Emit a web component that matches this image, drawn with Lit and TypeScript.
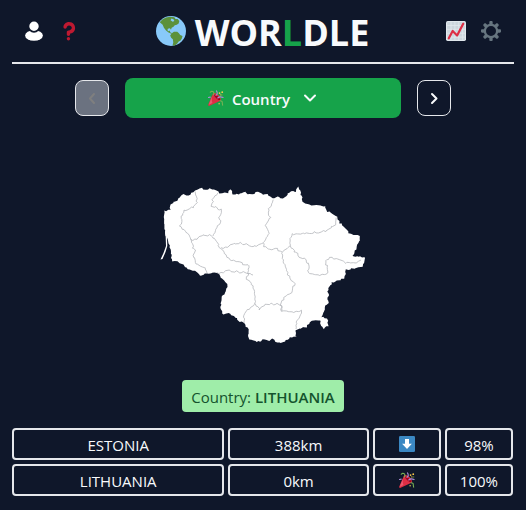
import { LitElement, html, css, svg } from "lit";
import { customElement, property, state } from "lit/decorators.js";

type Point = [number, number];

/* Country outline, clockwise from the north-west coast. */
const OUTLINE =
  "164,211 170,209 171,205 178,199 182,195 188,195 194,192 198,189 202,188 205,190 210,189 214,190 220,193 228,193 231,189 233,195 240,194 245,192 250,194 258,192 263,194 267,194 270,196 273,199 277,197 281,198 286,197 288,193 293,191 296,191 298,187 300,191 301,196 304,203 310,205 318,206 325,207 328,211 337,217 340,223 344,227 349,233 359,236 359,242 356,247 355,254 353,256 360,257 366,258 362,266 358,268 350,269 346,270 345,277 339,281 332,282 328,288 328,303 325,308 322,317 327,318 329,326 323,329 321,326 320,320 311,322 306,327 301,328 295,330 296,337 290,337 283,343 277,342 273,339 267,341 263,340 260,342 253,340 249,339 249,331 244,323 238,320 232,315 227,313 224,315 221,309 222,297 227,289 227,283 221,277 217,273 207,273 200,276 197,272 188,269 183,265 177,262 172,261 171,258 172,255 170,248 167,238 165,232 164,223";

/* Lines between the counties. */
const BORDERS = [
  "195,192 197,200 196,205 191,208 186,210 182,213 182,220 180,226 185,231 189,235 191,240",
  "218,193 213,197 212,206 217,208 222,210 219,216 221,221 216,229 213,236",
  "191,240 198,238 205,235 213,236 218,244 221,249 226,255 230,260 238,262 249,266 248,273 253,275",
  "191,240 194,249 195,253 193,257 198,265 206,268 207,273",
  "221,248 229,246 238,243 245,244 251,246 257,246 263,243",
  "273,200 268,211 270,217 266,225 269,235 264,241 264,246 270,250 277,249 282,252",
  "336,218 335,224 329,230 321,232 309,233 300,234 292,234 290,241 290,246 282,252 283,260 285,267 288,275 295,283 291,292 284,297 281,305 282,311",
  "290,246 295,251 298,256 306,260 309,264 308,269 310,274 318,275 328,274 327,266 325,261 330,258 338,259 345,263 355,263 361,260",
  "217,273 228,271 240,272 248,273 247,279 253,286 255,295 255,304 249,309 244,314 244,323",
  "255,304 260,309 267,304 276,304 281,305 282,311 292,312 302,311 300,317 296,322 296,329",
];

function parse(points: string): Point[] {
  return points.split(" ").map((p) => p.split(",").map(Number) as Point);
}

/* Breaks every segment in small steps pushed aside, as a surveyed border looks. */
function rough(points: string, amount: number, closed = false): string {
  const list = parse(points);
  if (closed) list.push(list[0]);
  let seed = 7;
  const rand = () => {
    seed = (seed * 1103515245 + 12345) % 2147483648;
    return seed / 2147483648 - 0.5;
  };
  const out: string[] = [];
  for (let i = 0; i < list.length - 1; i++) {
    const [x1, y1] = list[i];
    const [x2, y2] = list[i + 1];
    const steps = Math.max(1, Math.round(Math.hypot(x2 - x1, y2 - y1) / 2));
    for (let s = 0; s < steps; s++) {
      const t = s / steps;
      const x = x1 + (x2 - x1) * t + rand() * amount;
      const y = y1 + (y2 - y1) * t + rand() * amount;
      out.push(`${x.toFixed(1)} ${y.toFixed(1)}`);
    }
  }
  const last = list[list.length - 1];
  if (!closed) out.push(`${last[0]} ${last[1]}`);
  return `M${out.join("L")}${closed ? "Z" : ""}`;
}

const globe = svg`
  <circle cx="18" cy="18" r="18" fill="#88c9f9"/>
  <path fill="#5c913b" d="M4.500 7.500L8 4l4-2.200 5-1 5 .700 1.500 2 2.500.200L28 6l-.800 3L25 10.500 22.500 11 21 13l-2.200 1.200L18 16.500l-1.300-1.700-2.500.400-.500 2 1.500 1 1.500-.700.300 2 2.500 1.200-1 .600-3.500-1.500-3-2.300L9.500 14 8 10.500z"/>
  <path fill="#88c9f9" d="M18.500 3l2.500 1 1 2-2 .800-2.500-1.600z"/>
  <path fill="#5c913b" d="M19 20.800l2.500-2 4 .200 2 1.800 1.500 2 2.800 1.200-.800 3-1.500 2.500-2.300 1-1.700 2.500-2.500 2-2.200.800-.800-1 .700-3-.500-4-2-1.800-1.200-2.500z"/>`;

const question = svg`
  <path fill="#be1931" d="M17 27c-1.657 0-3-1.343-3-3v-4c0-1.657 1.343-3 3-3 .603-.006 6-1 6-5 0-2-2-4-5-4-2.441 0-4 2-4 3 0 1.657-1.343 3-3 3s-3-1.343-3-3c0-4.878 4.580-9 10-9 8 0 11 5.982 11 11 0 4.145-2.277 7.313-6.413 8.920-.900.351-1.790.587-2.587.747V24c0 1.657-1.343 3-3 3z"/>
  <circle fill="#be1931" cx="17" cy="32" r="3"/>`;

const user = svg`
  <ellipse cx="18" cy="26" rx="16" ry="9.500" fill="#fff"/>
  <circle cx="18" cy="9.500" r="10" fill="#fff" stroke="#0f172a" stroke-width="3"/>`;

const chart = svg`
  <rect width="36" height="36" rx="3" fill="#e1e8ed"/>
  <rect x="2" y="2" width="32" height="32" rx="1" fill="#ccd6dd"/>
  <path stroke="#e1e8ed" stroke-width="1.500" d="M9 2v32M16 2v32M23 2v32M30 2v32M2 8h32M2 15h32M2 22h32M2 29h32"/>
  <path fill="none" stroke="#dd2e44" stroke-width="4" stroke-linecap="round" stroke-linejoin="round" d="M5 31l7-13 8 8L31 5"/>`;

const gear = svg`
  <path fill="#66757f" fill-rule="evenodd" d="M34 15h-3.362c-.324-1.369-.864-2.651-1.582-3.814l2.379-2.379c.781-.781.781-2.048 0-2.829l-1.414-1.414c-.781-.781-2.047-.781-2.828 0l-2.379 2.379C23.650 6.225 22.369 5.686 21 5.362V2c0-1.104-.896-2-2-2h-2c-1.104 0-2 .896-2 2v3.362c-1.369.324-2.651.864-3.814 1.582L8.808 4.565c-.781-.781-2.048-.781-2.828 0L4.565 5.979c-.781.781-.781 2.048-.001 2.829l2.379 2.379C6.225 12.350 5.686 13.632 5.362 15H2c-1.104 0-2 .896-2 2v2c0 1.104.896 2 2 2h3.362c.324 1.368.864 2.650 1.582 3.813l-2.379 2.379c-.780.780-.780 2.048.001 2.829l1.414 1.414c.780.780 2.047.780 2.828 0l2.379-2.379c1.163.719 2.445 1.258 3.814 1.582V34c0 1.104.896 2 2 2h2c1.104 0 2-.896 2-2v-3.362c1.368-.324 2.650-.864 3.813-1.582l2.379 2.379c.781.781 2.047.781 2.828 0l1.414-1.414c.781-.781.781-2.048 0-2.829l-2.379-2.379c.719-1.163 1.258-2.445 1.582-3.814H34c1.104 0 2-.896 2-2v-2c0-1.104-.896-2-2-2zM18 27a9 9 0 1 1 0-18 9 9 0 0 1 0 18z"/>`;

const party = svg`
  <path fill="#dd2e44" d="M11.600 7.600c-.300.300-.500.600-.600 1.100L.100 33.500c-.300 1.200.800 2.400 2.300 2.300l24.500-11c.500-.100.900-.300 1.200-.600 2.200-2.200.300-7.600-4.200-12.200S13.800 5.500 11.600 7.600z"/>
  <path fill="#ea596e" d="M10 13L4 27l-2 6 8-4c-2-5-2-10 0-16z"/>
  <path fill="#a0041e" d="M14 10c3 0 7 3 10 6s4 6 3 7c-2 1-6-2-9-5s-5-7-4-8z"/>
  <g fill="none" stroke-width="2.400" stroke-linecap="round">
    <path stroke="#aa8dd8" d="M18 12c4-3 3-7 1-10M22 18c3-3 8-3 12-1M1 17l4-1"/>
    <path stroke="#77b255" d="M12 11c3-4 1-8-4-8l-3 2M27 24c4 0 6 2 5 5l1 5"/>
  </g>
  <g fill="#ffcc4d"><circle cx="26" cy="7" r="2"/><circle cx="32" cy="5" r="2"/><circle cx="29" cy="11" r="1.500"/><circle cx="25" cy="31" r="1.500"/></g>
  <circle cx="33" cy="11" r="1.500" fill="#5c913b"/>`;

const down = svg`
  <rect width="36" height="36" rx="3" fill="#3b88c3"/>
  <path fill="#fff" d="M13.500 7h9v10.500H29L18 29 7 17.500h6.500z"/>`;

const chevron = (d: string) => svg`
  <path d=${d} fill="none" stroke="currentColor" stroke-width="2" stroke-linecap="round" stroke-linejoin="round"/>`;

const ICONS: Record<string, { box: string; art: unknown }> = {
  globe: { box: "0 0 36 36", art: globe },
  question: { box: "0 0 36 36", art: question },
  user: { box: "0 0 36 36", art: user },
  chart: { box: "0 0 36 36", art: chart },
  gear: { box: "0 0 36 36", art: gear },
  party: { box: "0 0 36 36", art: party },
  down: { box: "0 0 36 36", art: down },
  left: { box: "0 0 16 16", art: chevron("M10 4L6 8.500l4 4.500") },
  right: { box: "0 0 16 16", art: chevron("M6 4l4.500 4.500L6 13") },
  expand: { box: "0 0 16 16", art: chevron("M3 5.500l5 5 5-5") },
};

@customElement("game-icon")
class GameIcon extends LitElement {
  @property() name = "";

  static styles = css`
    :host {
      display: block;
      flex: none;
      width: 20px;
      height: 20px;
    }
    .art {
      display: block;
      width: 100%;
      height: 100%;
    }
  `;

  render() {
    const icon = ICONS[this.name];
    return html`<svg class="art" viewBox=${icon.box} aria-hidden="true">${icon.art}</svg>`;
  }
}

@customElement("country-map")
class CountryMap extends LitElement {
  static styles = css`
    :host {
      display: block;
    }
    .map {
      display: block;
      width: 100%;
    }
    .land {
      fill: #fff;
    }
    .border {
      fill: none;
      stroke: #b4b6bb;
      stroke-width: 0.8;
    }
  `;

  render() {
    return html`
      <svg class="map" viewBox="158 185 210 160" role="img" aria-label="Country outline">
        <path class="land" d=${rough(OUTLINE, 1.8, true)}></path>
        <path class="land" d="M165.500 232L166 246L163.500 253L160.500 259.500L162.500 259L165.500 252L167.300 246L167 237Z"></path>
        ${BORDERS.map((b) => svg`<path class="border" d=${rough(b, 2)}></path>`)}
      </svg>
    `;
  }
}

interface Guess {
  name: string;
  distance: string;
  icon: string;
  label: string;
  score: string;
}

@customElement("app-root")
class AppRoot extends LitElement {
  @state() private guesses: Guess[] = [
    { name: "ESTONIA", distance: "388km", icon: "down", label: "South", score: "98%" },
    { name: "LITHUANIA", distance: "0km", icon: "party", label: "Correct", score: "100%" },
  ];

  static styles = css`
    :host {
      display: block;
      box-sizing: border-box;
      min-height: 100vh;
      padding: 0 12px 12px;
      background: #0f172a;
      color: #f8fafc;
      font: 15px/24px "Open Sans", "Noto Sans", sans-serif;
    }
    .header {
      display: flex;
      align-items: center;
      justify-content: space-between;
      height: 62px;
      padding: 0 13px 0 12px;
      border-bottom: 2px solid #e5e7eb;
    }
    .tools {
      display: flex;
      gap: 15px;
    }
    button {
      font: inherit;
      color: inherit;
      cursor: pointer;
    }
    .tool {
      padding: 0;
      border: 0;
      background: none;
    }
    .title {
      display: flex;
      align-items: center;
      gap: 9px;
      margin: 0;
      padding-top: 4px;
      font-size: 36px;
      line-height: 40px;
      font-weight: 700;
    }
    .globe {
      width: 30px;
      height: 30px;
      margin-bottom: 4px;
    }
    .accent {
      color: #16a34a;
    }
    .rounds {
      display: flex;
      align-items: center;
      gap: 16px;
      width: 75%;
      margin: 14px auto 0;
    }
    .step {
      display: flex;
      align-items: center;
      justify-content: center;
      width: 34px;
      height: 36px;
      padding: 0;
      border: 1px solid #e5e7eb;
      border-radius: 8px;
      background: none;
    }
    .step:disabled {
      background: #6b7280;
      color: #7f7f7f;
      cursor: default;
    }
    .small {
      width: 16px;
      height: 16px;
    }
    .round {
      display: flex;
      flex: 1;
      align-items: center;
      justify-content: center;
      height: 40px;
      padding: 0;
      border: 0;
      border-radius: 8px;
      background: #16a34a;
      font-weight: 600;
    }
    .round-name {
      margin: 0 12px 0 8px;
      padding-top: 2px;
    }
    .outline {
      width: 210px;
      max-width: 100%;
      margin: 67px auto 35px;
    }
    .answer {
      width: fit-content;
      margin: 0 auto 16px;
      padding: 5px 9px 3px;
      border-radius: 4px;
      background: #9feda9;
      color: #14532d;
    }
    .answer-name {
      font-weight: 600;
    }
    .guesses,
    .rows {
      display: grid;
      gap: 4px;
    }
    .guesses {
      margin-right: 1px;
    }
    .guess {
      display: grid;
      grid-template-columns: repeat(7, minmax(0, 1fr));
      gap: 4px;
    }
    .cell {
      display: flex;
      align-items: center;
      justify-content: center;
      box-sizing: border-box;
      height: 32px;
      padding: 2px 0 0;
      border: 2px solid #e5e7eb;
      border-radius: 4px;
    }
    .name {
      grid-column: span 3;
    }
    .distance {
      grid-column: span 2;
    }
    .mark {
      padding: 0;
    }
  `;

  render() {
    return html`
      <header class="header">
        <div class="tools">
          <button class="tool" aria-label="Profile"><game-icon name="user"></game-icon></button>
          <button class="tool" aria-label="How to play"><game-icon name="question"></game-icon></button>
        </div>
        <h1 class="title">
          <game-icon class="globe" name="globe"></game-icon>
          <span>WOR<span class="accent">L</span>DLE</span>
        </h1>
        <div class="tools">
          <button class="tool" aria-label="Statistics"><game-icon name="chart"></game-icon></button>
          <button class="tool" aria-label="Settings"><game-icon name="gear"></game-icon></button>
        </div>
      </header>
      <main>
        <nav class="rounds">
          <button class="step" aria-label="Previous round" disabled>
            <game-icon class="small" name="left"></game-icon>
          </button>
          <button class="round" aria-haspopup="menu">
            <game-icon class="small" name="party"></game-icon>
            <span class="round-name">Country</span>
            <game-icon class="small" name="expand"></game-icon>
          </button>
          <button class="step" aria-label="Next round">
            <game-icon class="small" name="right"></game-icon>
          </button>
        </nav>
        <country-map class="outline"></country-map>
        <div class="answer">Country: <span class="answer-name">LITHUANIA</span></div>
        <table class="guesses" aria-label="Guesses">
          <tbody class="rows">
            ${this.guesses.map(
              (g) => html`
                <tr class="guess">
                  <td class="cell name">${g.name}</td>
                  <td class="cell distance">${g.distance}</td>
                  <td class="cell mark" aria-label=${g.label}>
                    <game-icon class="small" name=${g.icon}></game-icon>
                  </td>
                  <td class="cell">${g.score}</td>
                </tr>
              `
            )}
          </tbody>
        </table>
      </main>
    `;
  }
}
